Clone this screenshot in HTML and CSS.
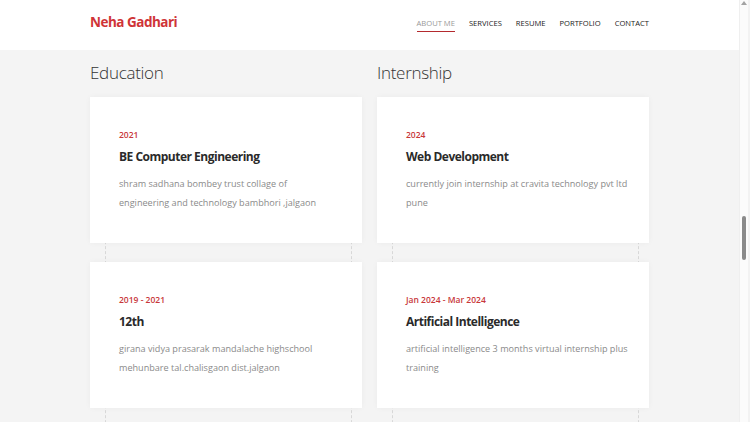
FILE: index.html
```html
<!DOCTYPE html>
<html lang="en">
<head>
<meta charset="utf-8">
<title>Neha Gadhari</title>
<link rel="stylesheet" href="styles.css">
</head>
<body>
<div class="frame">
  <div class="page">
    <header class="header">
      <div class="container header-inner">
        <div class="logo">Neha Gadhari</div>
        <nav class="nav">
          <a class="nav-link active">ABOUT ME</a>
          <a class="nav-link">SERVICES</a>
          <a class="nav-link">RESUME</a>
          <a class="nav-link">PORTFOLIO</a>
          <a class="nav-link">CONTACT</a>
        </nav>
      </div>
    </header>
    <main class="container resume">
      <section class="column">
        <h2 class="column-title">Education</h2>
        <div class="timeline">
          <div class="card">
            <div class="year">2021</div>
            <h3 class="card-title">BE Computer Engineering</h3>
            <p class="card-text">shram sadhana bombey trust collage of<br>engineering and technology bambhori ,jalgaon</p>
          </div>
          <div class="card">
            <div class="year">2019 - 2021</div>
            <h3 class="card-title">12th</h3>
            <p class="card-text">girana vidya prasarak mandalache highschool mehunbare tal.chalisgaon dist.jalgaon</p>
          </div>
        </div>
      </section>
      <section class="column">
        <h2 class="column-title">Internship</h2>
        <div class="timeline timeline-right">
          <div class="card">
            <div class="year">2024</div>
            <h3 class="card-title">Web Development</h3>
            <p class="card-text">currently join internship at cravita technology pvt ltd pune</p>
          </div>
          <div class="card">
            <div class="year">Jan 2024 - Mar 2024</div>
            <h3 class="card-title">Artificial Intelligence</h3>
            <p class="card-text">artificial intelligence 3 months virtual internship plus training</p>
          </div>
        </div>
      </section>
    </main>
  </div>
  <div class="scrollbar">
    <div class="scroll-arrow"></div>
    <div class="scroll-track"><div class="scroll-thumb"></div></div>
  </div>
</div>
</body>
</html>
```

FILE: styles.css
```css
* { box-sizing: border-box; }
html, body { margin: 0; padding: 0; height: 100%; overflow: hidden; }
body {
  font-family: "Open Sans", "Liberation Sans", sans-serif;
  background: #f4f4f4;
  color: #333;
}
.frame { display: flex; height: 422px; width: 750px; }
.page { flex: 1; background: #f4f4f4; overflow: hidden; }
.scrollbar {
  width: 11px;
  background: #fbfbfb;
  border-left: 1px solid #efefef;
  border-right: 2px solid #f2f2f2;
  display: flex;
  flex-direction: column;
  align-items: center;
}
.scroll-arrow {
  margin-top: 1px;
  width: 0; height: 0;
  border-left: 3px solid transparent;
  border-right: 3px solid transparent;
  border-bottom: 4px solid #a3a3a3;
}
.scroll-track { flex: 1; width: 100%; display: flex; justify-content: center; }
.scroll-thumb {
  margin-top: 211px;
  width: 4px;
  height: 44px;
  border-radius: 2px;
  background: #8a8a8a;
}
.container { width: 559px; margin: 0 auto; }
.header { background: #fff; height: 50px; padding-bottom: 6px; }
.header-inner { display: flex; align-items: center; justify-content: space-between; height: 44px; }
.logo { font-weight: 700; font-size: 13.5px; color: #cf3437; letter-spacing: -0.5px; }
.nav { display: flex; gap: 14px; align-items: center; padding-top: 5px; }
.nav-link {
  font-size: 7.6px;
  color: #222;
  padding: 0 0 3px;
  border-bottom: 1.5px solid transparent;
}
.nav-link.active { color: #999; border-bottom-color: #b42a2e; }
.resume { display: flex; gap: 15px; padding-top: 10px; }
.column { width: 272px; }
.column-title {
  margin: 0 0 11px;
  font-weight: 300;
  font-size: 17px;
  letter-spacing: -0.3px;
  line-height: 26px;
  color: #333;
}
.timeline {
  display: flex;
  flex-direction: column;
  gap: 19px;
  position: relative;
}
.timeline::before {
  content: "";
  position: absolute;
  top: 0; bottom: -40px;
  left: 15px; right: 10px;
  border-left: 1px dashed #d8d8d8;
  border-right: 1px dashed #d8d8d8;
}
.card {
  position: relative;
  background: #fff;
  height: 146px;
  padding: 32px 20px 0 29px;
  box-shadow: 0 0 6px rgba(0,0,0,0.04);
}
.year { font-size: 8.5px; font-weight: 600; color: #c8373a; line-height: 12px; }
.card-title { margin: 7px 0 8px; font-size: 12px; font-weight: 700; color: #2a2a2a; line-height: 18px; letter-spacing: -0.5px; }
.card-text { margin: 0; font-size: 9.1px; line-height: 19px; color: #8a8a8a; }
```
